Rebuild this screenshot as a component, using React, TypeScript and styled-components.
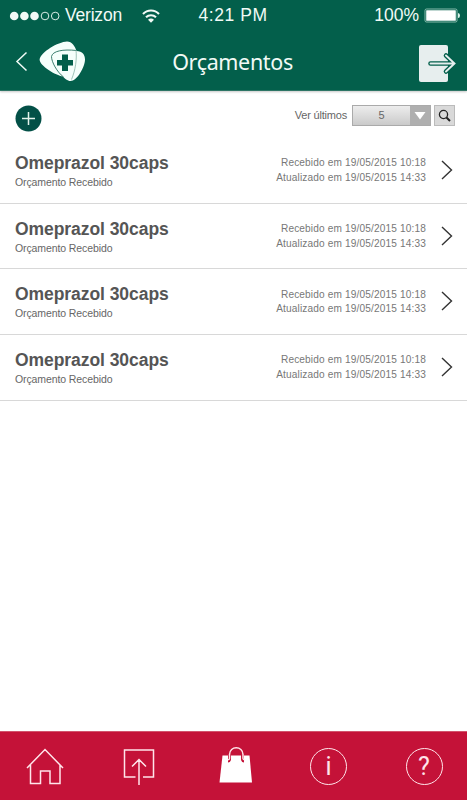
import React from "react";
import styled, { createGlobalStyle } from "styled-components";

const Global = createGlobalStyle`
  * { box-sizing: border-box; }
  body { margin: 0; background: #fff; font-family: "Liberation Sans", Arial, sans-serif; }
  svg { display: block; flex: none; overflow: visible; }
  button { padding: 0; border: 0; background: none; color: inherit; font: inherit; }
`;

const Screen = styled.div`
  display: flex;
  flex-direction: column;
  width: 467px;
  height: 800px;
  overflow: hidden;
  background: #fff;
`;

const Header = styled.header`
  height: 91px;
  flex: none;
  background: #035f4b;
  border-bottom: 1px solid #2d7565;
  box-shadow: 0 1px 2px rgba(0, 0, 0, 0.22);
  color: #f1faf6;
`;

const StatusBar = styled.div`
  display: grid;
  grid-template-columns: 173px 1fr 173px;
  align-items: center;
  height: 31px;
  padding: 0 6px 0 10px;
`;

const StatusGroup = styled.div<{ $end?: boolean }>`
  display: flex;
  align-items: center;
  justify-content: ${(p) => (p.$end ? "flex-end" : "flex-start")};
`;

const StatusText = styled.span<{ $gap?: number; $track?: number }>`
  font-size: 17.5px;
  line-height: 28px;
  padding-bottom: 1px;
  margin-left: ${(p) => p.$gap ?? 0}px;
  letter-spacing: ${(p) => p.$track ?? 0}px;
  white-space: nowrap;
`;

const Clock = styled(StatusText)`
  margin-left: 15.5px;
`;

const WifiIcon = styled.svg`
  margin-left: 20px;
`;

const NavBar = styled.div`
  display: grid;
  grid-template-columns: 86px 1fr 86px;
  align-items: center;
  height: 60px;
`;

const NavLeft = styled.div`
  display: flex;
  align-items: center;
  padding-left: 16px;
  gap: 11px;
`;

const NavRight = styled.div`
  display: flex;
  justify-content: flex-end;
  padding: 5px 10px 0 0;
`;

const Title = styled.h1`
  margin: 1px 2px 0 0;
  text-align: center;
  font: 400 21.5px/32px "Noto Sans", sans-serif;
  letter-spacing: -0.35px;
`;

const Toolbar = styled.div`
  display: flex;
  align-items: center;
  justify-content: space-between;
  flex: none;
  height: 47px;
  padding: 1px 12px 0 15px;
`;

const AddButton = styled.button`
  margin-top: 7px;
`;

const Filter = styled.div`
  display: flex;
  align-items: center;
  height: 21px;
`;

const FilterLabel = styled.span`
  margin-right: 5px;
  font-size: 11px;
  letter-spacing: -0.2px;
  color: #666;
`;

const Select = styled.button`
  display: flex;
  width: 79px;
  height: 21px;
  border: 1px solid #aaa;
  background: linear-gradient(#ededed, #cacaca);
  color: #666;
  font-size: 11px;
`;

const SelectValue = styled.span`
  flex: 1;
  line-height: 19px;
  text-align: center;
`;

const SelectArrow = styled.span`
  display: flex;
  align-items: center;
  justify-content: center;
  width: 20px;
  height: 19px;
  background: #afafaf;
`;

const SearchButton = styled.button`
  display: flex;
  align-items: center;
  justify-content: center;
  width: 21px;
  height: 21px;
  margin-left: 3px;
  border: 1px solid #bbb;
  background: #d9d9d9;
`;

const List = styled.main`
  flex: 1;
`;

const Row = styled.article`
  display: flex;
  justify-content: space-between;
  height: 65.7px;
  padding: 15px 14px 0 15px;
  border-bottom: 1px solid #d8d8d8;
`;

const Name = styled.h2`
  margin: 0;
  font-size: 17.5px;
  line-height: 21px;
  letter-spacing: -0.06px;
  color: #555;
`;

const State = styled.p`
  margin: 1px 0 0;
  font-size: 10.5px;
  line-height: 14px;
  letter-spacing: -0.1px;
  color: #666;
`;

const RowSide = styled.div`
  display: flex;
  gap: 15px;
`;

const Dates = styled.div`
  padding-top: 3.3px;
  text-align: right;
  font-size: 10.1px;
  letter-spacing: 0.15px;
  line-height: 14.6px;
  color: #777;
`;

const RowArrow = styled.span`
  padding-top: 7px;
`;

const TabBar = styled.nav`
  display: grid;
  grid-template-columns: 90px 98px 95px 91px 1fr;
  flex: none;
  height: 69px;
  border-top: 1px solid #d2536c;
  background: #c41238;
  color: #ffe5ea;
`;

const Tab = styled.button<{ $nudge?: number }>`
  display: flex;
  justify-content: center;
  padding-top: 14px;
  padding-left: ${(p) => p.$nudge ?? 0}px;
`;

const Logo = () => (
  <svg width="47" height="42" viewBox="0 0 47 42">
    <path d="M.6 19.500C2 12 19 2 28 1.600c5 0 8 5 9.500 9.400 6 0 8.500 4 8.500 8.500C46 27 38 41 31.500 41c-3 0-6-2.500-7.500-4.500C17 35.500 .6 26 .6 19.500Z" fill="#f5fffb" />
    <path d="M24.500 37C18 32 12.500 22 12.500 16.500 13.500 11 24 9 37.500 10.500" fill="none" stroke="#27705f" strokeWidth=".9" />
    <path d="M37 10c1 9-.5 20-4.500 29.500" fill="none" stroke="#78a99b" strokeWidth=".7" />
    <path d="M23 14.500h6V20h5v5.500h-5V31h-6v-5.500h-5V20h5Z" fill="#035f4b" />
  </svg>
);

const ExitIcon = () => (
  <svg width="39" height="39" viewBox="0 0 39 39">
    <rect x="1" y="1" width="29" height="37" rx="2" fill="#e7eeee" />
    <path d="M12.500 19.500H36M28 11.500l8.500 8-8.500 8" fill="none" stroke="#035f4b" strokeWidth="4.600" strokeLinecap="round" />
    <path d="M12.500 19.500H36M28 11.500l8.500 8-8.500 8" fill="none" stroke="#e7eeee" strokeWidth="1.900" strokeLinecap="round" />
  </svg>
);

const HomeIcon = () => (
  <svg width="38" height="38" viewBox="0 0 38 38" fill="none" stroke="currentColor" strokeWidth="1.500">
    <path d="M1 22 19 3.500 37 22M4.500 19v18.500h10V25H24v12.500h10V19" />
  </svg>
);

const UploadIcon = () => (
  <svg width="38" height="38" viewBox="0 0 38 38" fill="none" stroke="currentColor" strokeWidth="1.500">
    <path d="M15.500 31H4.500V4h29v27h-10.500M19 39V14M12 20.500l7-7 7 7" />
  </svg>
);

const BagIcon = () => (
  <svg width="38" height="38" viewBox="0 0 38 38">
    <path d="M5.500 9.500h27L35 36.500H2.500Z" fill="#fff" />
    <path d="M11 15c2 0 1.500-2.500 1.500-6 0-9 13-9 13 0 0 3.500-.5 6 1.500 6" fill="none" stroke="#c41238" strokeWidth="3" />
    <path d="M11 13.800c2 0 1.500-2 1.500-5.300 0-9 13.500-9 13.500 0 0 3.300-.5 5.300 1.500 5.300" fill="none" stroke="#ffe5ea" strokeWidth="1.500" />
  </svg>
);

const CircleMark = styled.span`
  display: flex;
  align-items: center;
  justify-content: center;
  width: 37px;
  height: 37px;
  margin-top: 2px;
  border: 1.5px solid currentColor;
  border-radius: 50%;
  font: 400 25px/34px Roboto, sans-serif;
`;

const quotes = Array.from({ length: 4 }, (_, id) => ({
  id,
  name: "Omeprazol 30caps",
  state: "Orçamento Recebido",
  received: "Recebido em 19/05/2015 10:18",
  updated: "Atualizado em 19/05/2015 14:33",
}));

export default function App() {
  return (
    <>
      <Global />
      <Screen>
        <Header>
          <StatusBar>
            <StatusGroup>
              <svg width="50" height="10" viewBox="0 0 50 10" fill="currentColor">
                {[4.2, 14.4, 24.5].map((x) => (
                  <circle key={x} cx={x} cy="5" r="4.300" />
                ))}
                <g fill="none" stroke="currentColor" strokeWidth=".9">
                  <circle cx="35" cy="5" r="3.800" />
                  <circle cx="45.200" cy="5" r="3.800" />
                </g>
              </svg>
              <StatusText $gap={5} $track={-0.2}>Verizon</StatusText>
              <WifiIcon width="18" height="14" viewBox="0 0 18 14">
                <g fill="none" stroke="currentColor" strokeWidth="2.100">
                  <path d="M1 5a11 11 0 0 1 16 0M4 8.300a7 7 0 0 1 10 0" />
                  <path d="m6 10.800 3 3 3-3q-3-2.500-6 0Z" fill="currentColor" stroke="none" />
                </g>
              </WifiIcon>
            </StatusGroup>
            <Clock $track={0.55}>4:21 PM</Clock>
            <StatusGroup $end>
              <StatusText>100%</StatusText>
              <svg width="42" height="15" viewBox="0 0 42 15">
                <rect x="6" y="1" width="32" height="13" rx="1.500" fill="none" stroke="#a9d2c4" strokeWidth=".8" />
                <rect x="7.200" y="2.300" width="29.600" height="10.400" rx=".5" fill="#fff" />
                <path d="M39 5q2 0 2 2.500T39 10Z" fill="#d8f2e9" />
              </svg>
            </StatusGroup>
          </StatusBar>
          <NavBar>
            <NavLeft>
              <svg width="12" height="20" viewBox="0 0 12 20" fill="none" stroke="currentColor" strokeWidth="1.500">
                <path d="M10.500 1.500 1 10.500l9.500 9" />
              </svg>
              <Logo />
            </NavLeft>
            <Title>Orçamentos</Title>
            <NavRight>
              <ExitIcon />
            </NavRight>
          </NavBar>
        </Header>

        <Toolbar>
          <AddButton aria-label="Adicionar">
            <svg width="27" height="27" viewBox="0 0 27 27">
              <circle cx="13.500" cy="13.500" r="13" fill="#035047" />
              <path d="M7 13.500h13M13.500 7v13" stroke="#e4f2ec" strokeWidth="1.500" />
            </svg>
          </AddButton>
          <Filter>
            <FilterLabel>Ver últimos</FilterLabel>
            <Select>
              <SelectValue>5</SelectValue>
              <SelectArrow>
                <svg width="12" height="9" viewBox="0 0 12 9">
                  <path d="M.5 1h11L6 8.500Z" fill="#fff" />
                </svg>
              </SelectArrow>
            </Select>
            <SearchButton aria-label="Pesquisar">
              <svg width="13" height="13" viewBox="0 0 13 13" fill="none" stroke="#222" strokeWidth="1.300">
                <circle cx="5.500" cy="5.500" r="4.100" />
                <path d="m8.500 8.500 3.500 3.500" strokeWidth="2" />
              </svg>
            </SearchButton>
          </Filter>
        </Toolbar>

        <List>
          {quotes.map((q) => (
            <Row key={q.id}>
              <div>
                <Name>{q.name}</Name>
                <State>{q.state}</State>
              </div>
              <RowSide>
                <Dates>
                  <div>{q.received}</div>
                  <div>{q.updated}</div>
                </Dates>
                <RowArrow>
                  <svg width="12" height="20" viewBox="0 0 12 20" fill="none" stroke="#333" strokeWidth="1.400">
                    <path d="m1 1 9.500 9L1 19" />
                  </svg>
                </RowArrow>
              </RowSide>
            </Row>
          ))}
        </List>

        <TabBar>
          <Tab aria-label="Início"><HomeIcon /></Tab>
          <Tab aria-label="Enviar"><UploadIcon /></Tab>
          <Tab aria-label="Compras"><BagIcon /></Tab>
          <Tab aria-label="Informações"><CircleMark>i</CircleMark></Tab>
          <Tab aria-label="Ajuda" $nudge={7}><CircleMark>?</CircleMark></Tab>
        </TabBar>
      </Screen>
    </>
  );
}
